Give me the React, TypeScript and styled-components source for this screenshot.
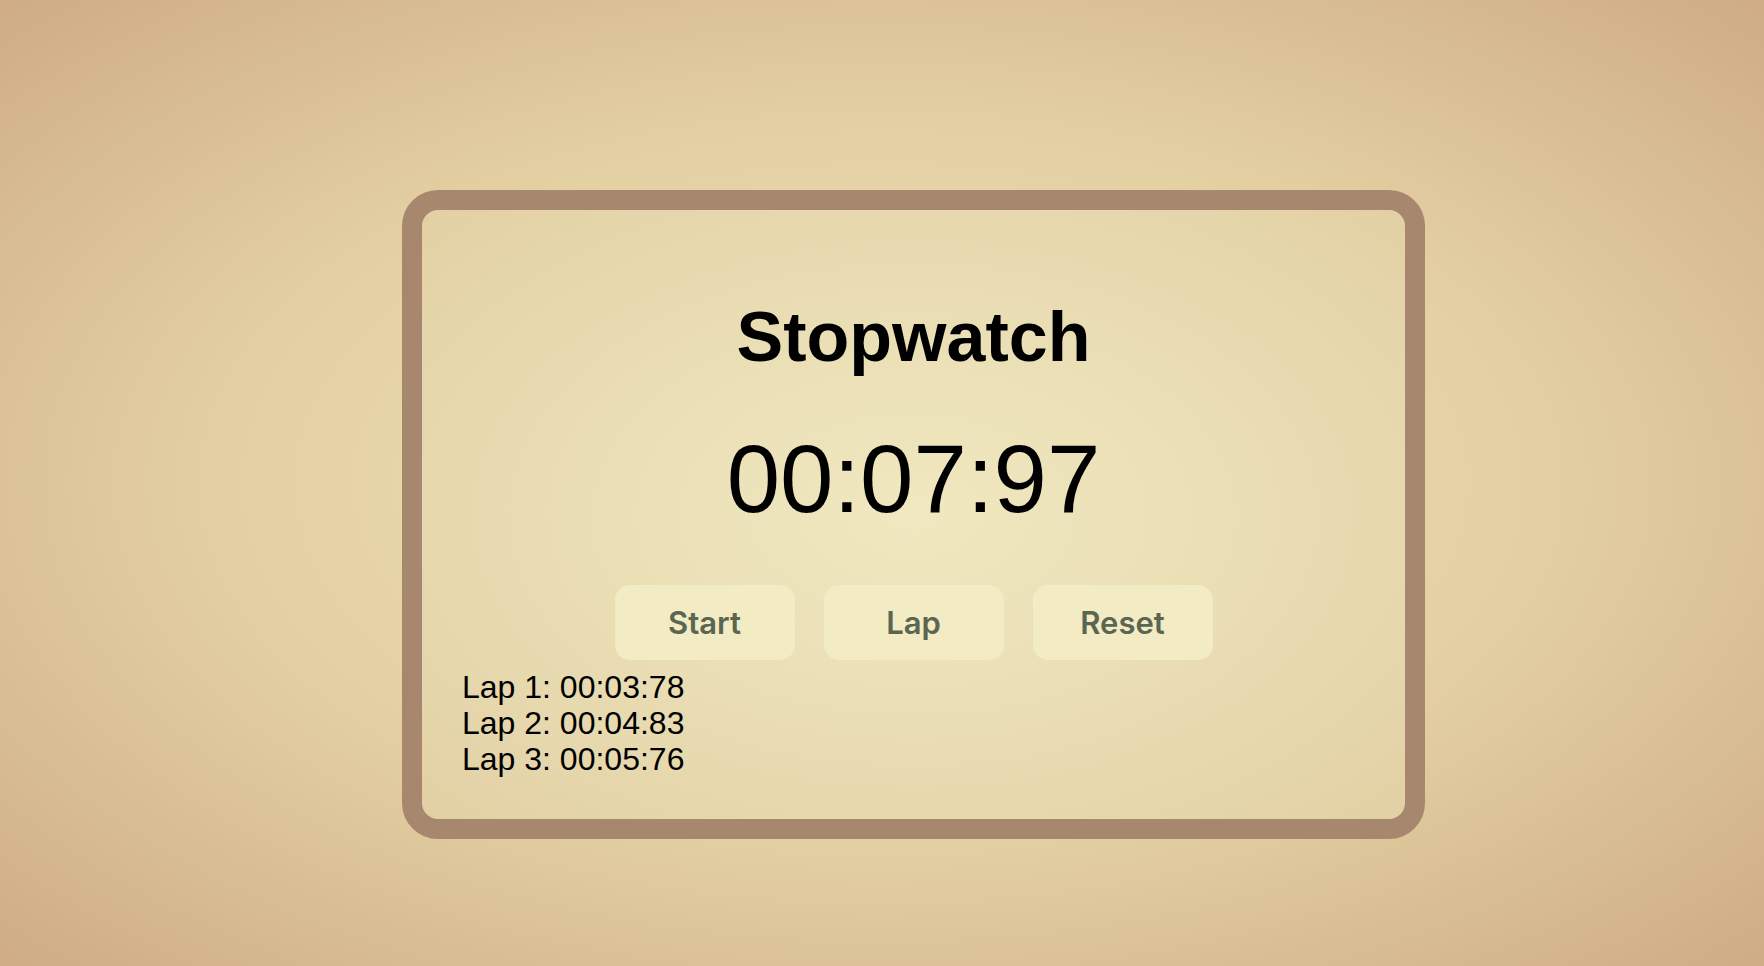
import React from "react";
import styled, { createGlobalStyle } from "styled-components";

const GlobalStyle = createGlobalStyle`
  html, body {
    margin: 0;
    padding: 0;
  }
  body {
    font-family: "Liberation Sans", Arial, sans-serif;
    background: radial-gradient(ellipse at center, #efe5bb 0%, #e2cea1 55%, #cfac86 100%);
    min-height: 100vh;
  }
`;

const Page = styled.div`
  box-sizing: border-box;
  height: 100vh;
  padding: 63px 0 0 63px;
  display: flex;
  align-items: center;
  justify-content: center;
`;

const Card = styled.div`
  box-sizing: border-box;
  width: 1023px;
  padding: 40px 40px 42px;
  border: 20px solid #a8876f;
  border-radius: 36px;
  background: radial-gradient(ellipse at center, #f0e8c0 0%, #e9dcb2 55%, #e2d0a4 100%);
  display: flex;
  flex-direction: column;
`;

const Title = styled.h1`
  margin: 0.67em 0;
  font-size: 70px;
  font-weight: 700;
  text-align: center;
  color: #000;
`;

const Time = styled.div`
  font-size: 96px;
  text-align: center;
  color: #000;
  margin-bottom: 51px;
`;

const Controls = styled.div`
  display: flex;
  justify-content: center;
  gap: 29px;
`;

const Button = styled.button`
  width: 180px;
  height: 75px;
  border: none;
  border-radius: 15px;
  background: #f2ebc4;
  color: #5b6650;
  font-family: Inter, "Noto Sans", sans-serif;
  font-size: 31px;
  font-weight: 600;
  cursor: pointer;
`;

const Laps = styled.ul`
  list-style: none;
  margin: 9px 0 0;
  padding: 0;
`;

const Lap = styled.li`
  font-size: 32px;
  line-height: 36px;
  color: #000;
`;

const laps = ["00:03:78", "00:04:83", "00:05:76"];

export default function App() {
  return (
    <>
      <GlobalStyle />
      <Page>
        <Card>
          <Title>Stopwatch</Title>
          <Time>00:07:97</Time>
          <Controls>
            <Button>Start</Button>
            <Button>Lap</Button>
            <Button>Reset</Button>
          </Controls>
          <Laps>
            {laps.map((t, i) => (
              <Lap key={i}>
                Lap {i + 1}: {t}
              </Lap>
            ))}
          </Laps>
        </Card>
      </Page>
    </>
  );
}
